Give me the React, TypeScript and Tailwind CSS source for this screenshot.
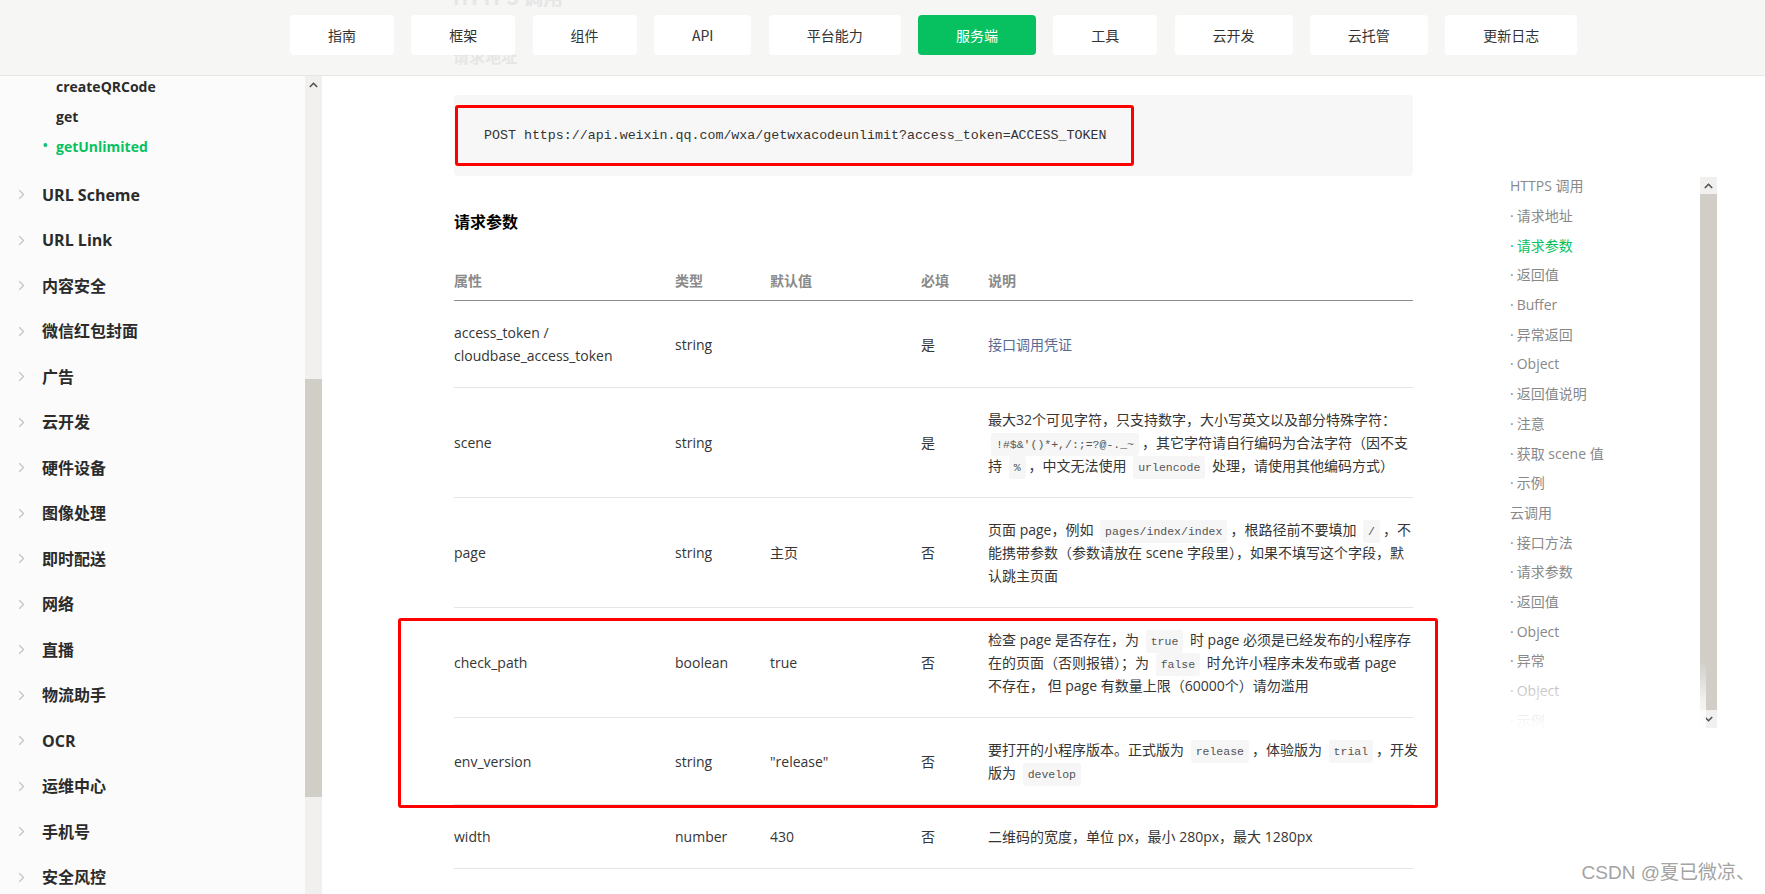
import React from "react";

const navItems = ["指南", "框架", "组件", "API", "平台能力", "服务端", "工具", "云开发", "云托管", "更新日志"];

const sections = [
  "URL Scheme",
  "URL Link",
  "内容安全",
  "微信红包封面",
  "广告",
  "云开发",
  "硬件设备",
  "图像处理",
  "即时配送",
  "网络",
  "直播",
  "物流助手",
  "OCR",
  "运维中心",
  "手机号",
  "安全风控",
];

const toc: { t: string; sub?: boolean; active?: boolean }[] = [
  { t: "HTTPS 调用" },
  { t: "请求地址", sub: true },
  { t: "请求参数", sub: true, active: true },
  { t: "返回值", sub: true },
  { t: "Buffer", sub: true },
  { t: "异常返回", sub: true },
  { t: "Object", sub: true },
  { t: "返回值说明", sub: true },
  { t: "注意", sub: true },
  { t: "获取 scene 值", sub: true },
  { t: "示例", sub: true },
  { t: "云调用" },
  { t: "接口方法", sub: true },
  { t: "请求参数", sub: true },
  { t: "返回值", sub: true },
  { t: "Object", sub: true },
  { t: "异常", sub: true },
  { t: "Object", sub: true },
  { t: "示例", sub: true },
];

function Chevron() {
  return (
    <svg width="7" height="11" viewBox="0 0 7 11">
      <path d="M1.2 1.2 L5.6 5.5 L1.2 9.8" fill="none" stroke="#c2c2c2" strokeWidth="1.2" />
    </svg>
  );
}

function UpCaret() {
  return (
    <svg width="9" height="6" viewBox="0 0 9 6">
      <path d="M0.8 5 L4.5 1.3 L8.2 5" fill="none" stroke="#505050" strokeWidth="1.6" />
    </svg>
  );
}

function DownCaret() {
  return (
    <svg width="9" height="6" viewBox="0 0 9 6">
      <path d="M0.8 1 L4.5 4.7 L8.2 1" fill="none" stroke="#505050" strokeWidth="1.6" />
    </svg>
  );
}

function C({ children }: { children: React.ReactNode }) {
  return (
    <code className="font-['Liberation_Mono',monospace] text-[11.5px] leading-[12px] text-[#555] bg-[#f6f6f6] rounded-[3px] px-[5px] py-[5px] mx-[3px]">
      {children}
    </code>
  );
}

type Row = {
  name: React.ReactNode;
  type: string;
  def: string;
  req: string;
  desc: React.ReactNode;
};

const rowsA: Row[] = [
  {
    name: (
      <>
        access_token /<br />
        cloudbase_access_token
      </>
    ),
    type: "string",
    def: "",
    req: "是",
    desc: <span className="text-[#576b95]">接口调用凭证</span>,
  },
  {
    name: "scene",
    type: "string",
    def: "",
    req: "是",
    desc: (
      <>
        最大32个可见字符，只支持数字，大小写英文以及部分特殊字符：
        <br />
        <C>!#$&amp;'()*+,/:;=?@-._~</C>，其它字符请自行编码为合法字符（因不支
        <br />
        持 <C>%</C>，中文无法使用 <C>urlencode</C> 处理，请使用其他编码方式）
      </>
    ),
  },
  {
    name: "page",
    type: "string",
    def: "主页",
    req: "否",
    desc: (
      <>
        页面 page，例如 <C>pages/index/index</C>，根路径前不要填加 <C>/</C>，不
        <br />
        能携带参数（参数请放在 scene 字段里），如果不填写这个字段，默
        <br />
        认跳主页面
      </>
    ),
  },
];

const rowsB: Row[] = [
  {
    name: "check_path",
    type: "boolean",
    def: "true",
    req: "否",
    desc: (
      <>
        检查 page 是否存在，为 <C>true</C> 时 page 必须是已经发布的小程序存
        <br />
        在的页面（否则报错）；为 <C>false</C> 时允许小程序未发布或者 page
        <br />
        不存在， 但 page 有数量上限（60000个）请勿滥用
      </>
    ),
  },
  {
    name: "env_version",
    type: "string",
    def: "\"release\"",
    req: "否",
    desc: (
      <>
        要打开的小程序版本。正式版为 <C>release</C>，体验版为 <C>trial</C>，开发
        <br />
        版为 <C>develop</C>
      </>
    ),
  },
];

const rowsC: Row[] = [
  {
    name: "width",
    type: "number",
    def: "430",
    req: "否",
    desc: <>二维码的宽度，单位 px，最小 280px，最大 1280px</>,
  },
];

function TableRow({ r }: { r: Row }) {
  return (
    <div className="grid grid-cols-[221px_95px_151px_67px_425px] items-center border-b border-[#e6e6e6] text-[14px] leading-[23px] text-[#353535]">
      <div className="py-[20px]">{r.name}</div>
      <div className="py-[20px]">{r.type}</div>
      <div className="py-[20px]">{r.def}</div>
      <div className="py-[20px]">{r.req}</div>
      <div className="py-[20px] whitespace-nowrap">{r.desc}</div>
    </div>
  );
}

export default function App() {
  return (
    <div className="relative w-[1765px] h-[894px] overflow-hidden bg-white flex flex-col font-['Open_Sans','Noto_Sans_CJK_SC',sans-serif]">
      {/* Header */}
      <header className="relative h-[76px] shrink-0 bg-[#f6f6f5] border-b border-[#e7e7e5] flex items-start pt-[15px] pl-[290px] gap-[17.3px] font-['Noto_Sans_CJK_SC',sans-serif]">
        <span className="absolute left-[453px] top-[-15px] text-[20px] font-bold leading-[24px] text-[#e6e6e4]">
          HTTPS 调用
        </span>
        <span className="absolute left-[453px] top-[47px] text-[16px] font-bold leading-[18px] text-[#e6e6e4]">
          请求地址
        </span>
        {navItems.map((n) => (
          <div
            key={n}
            className={
              n === "服务端"
                ? "relative h-[40px] px-[38px] rounded-[4px] bg-[#07c160] text-white text-[14px] flex items-center"
                : "relative h-[40px] px-[38px] rounded-[4px] bg-white text-[#333] text-[14px] flex items-center"
            }
          >
            {n}
          </div>
        ))}
      </header>

      <div className="flex flex-1 min-h-0">
        {/* Sidebar */}
        <aside className="w-[305px] shrink-0 bg-[#fbfbfb] overflow-hidden">
          <div className="-mt-[5px]">
            <div className="h-[30px] flex items-center pl-[56px] text-[14px] font-bold text-[#2b2b2b]">createQRCode</div>
            <div className="h-[30px] flex items-center pl-[56px] text-[14px] font-bold text-[#2b2b2b]">get</div>
            <div className="h-[30px] flex items-center pl-[43px] text-[14px] font-bold text-[#07c160]">
              <span className="w-[13px] text-[12px]">•</span>
              getUnlimited
            </div>
          </div>
          <div className="mt-[11px]">
            {sections.map((s) => (
              <div key={s} className="h-[45.5px] flex items-center pl-[18px]">
                <Chevron />
                <span className="ml-[17px] text-[16px] font-bold text-[#2b2b2b]">{s}</span>
              </div>
            ))}
          </div>
        </aside>
        {/* Sidebar scrollbar */}
        <div className="w-[17px] shrink-0 bg-[#f1f0ee] flex flex-col">
          <div className="h-[17px] flex items-center justify-center">
            <UpCaret />
          </div>
          <div className="h-[286px]" />
          <div className="h-[418px] bg-[#d1cec8]" />
        </div>

        {/* Main */}
        <main className="flex-1 flex min-w-0">
          <div className="ml-[132px] w-[959px] shrink-0">
            <div className="mt-[19px] h-[81px] bg-[#f7f7f7] rounded-[4px] pt-[10px] pl-[1px]">
              <div className="w-[679px] h-[61px] border-[3px] border-[#ff0000] rounded-[3px] pl-[26px] flex items-center font-['Liberation_Mono',monospace] text-[13.3px] text-[#333]">
                POST https://api.weixin.qq.com/wxa/getwxacodeunlimit?access_token=ACCESS_TOKEN
              </div>
            </div>

            <h2 className="mt-[33px] text-[16px] leading-[24px] font-bold text-black font-['Noto_Sans_CJK_SC',sans-serif]">
              请求参数
            </h2>

            <div className="mt-[25px]">
              <div className="grid grid-cols-[221px_95px_151px_67px_425px] items-center h-[43px] pt-[2px] border-b border-[#8d8d8d] text-[14px] font-bold text-[#8a8a8a] font-['Noto_Sans_CJK_SC',sans-serif]">
                <div>属性</div>
                <div>类型</div>
                <div>默认值</div>
                <div>必填</div>
                <div>说明</div>
              </div>
              {rowsA.map((r, i) => (
                <TableRow key={i} r={r} />
              ))}
              <div className="relative">
                {rowsB.map((r, i) => (
                  <TableRow key={i} r={r} />
                ))}
                <div className="absolute left-[-56px] right-[-25px] top-[10px] bottom-[-3px] border-[3px] border-[#ff0000] rounded-[3px] pointer-events-none" />
              </div>
              {rowsC.map((r, i) => (
                <TableRow key={i} r={r} />
              ))}
            </div>
          </div>

          {/* TOC */}
          <div className="relative ml-[97px] mt-[95px] flex items-start h-[560px]">
            <div className="w-[190px] h-[560px] overflow-hidden text-[14px] text-[#888]">
              {toc.map((it, i) => (
                <div
                  key={i}
                  className={
                    it.active
                      ? "h-[29.7px] flex items-center text-[#07c160]"
                      : "h-[29.7px] flex items-center"
                  }
                >
                  {it.sub ? <span className="mr-[3px]">·</span> : null}
                  <span>{it.t}</span>
                </div>
              ))}
            </div>
            <div className="mt-[6px] w-[17px] h-[551px] flex flex-col bg-[#f1f0ee]">
              <div className="h-[17px] flex items-center justify-center">
                <UpCaret />
              </div>
              <div className="flex-1 bg-[#d1cec8]" />
              <div className="h-[18px] flex items-center justify-center">
                <DownCaret />
              </div>
            </div>
            <div className="absolute left-0 right-[11px] bottom-0 h-[70px] bg-[linear-gradient(to_bottom,rgba(255,255,255,0),rgba(255,255,255,0.7)_55%,#fff)] pointer-events-none" />
          </div>
        </main>
      </div>

      <div className="absolute right-[10px] bottom-[10px] text-[19px] leading-[22px] text-[#a3a3a3] font-['Liberation_Sans','Noto_Sans_CJK_SC',sans-serif] [text-shadow:0_0_1px_#fff]">
        CSDN @夏已微凉、
      </div>
    </div>
  );
}
